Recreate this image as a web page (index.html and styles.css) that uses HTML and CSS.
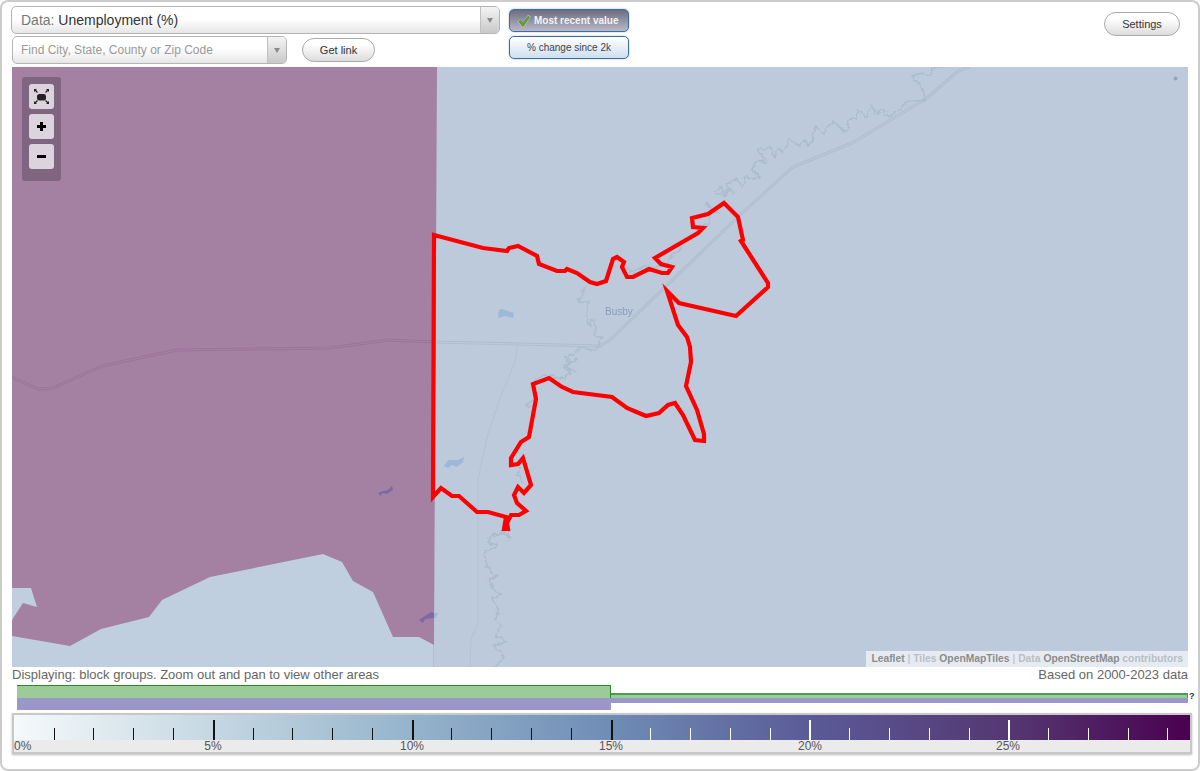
FILE: index.html
```html
<!DOCTYPE html>
<html lang="en">
<head>
<meta charset="utf-8">
<title>Unemployment map</title>
<link rel="stylesheet" href="styles.css">
</head>
<body>
<div class="frame">
  <header class="top">
    <div class="search-col">
      <div class="select data-select">
        <div class="select-text"><span class="muted">Data:</span> Unemployment (%)</div>
        <div class="select-arrow"><i class="tri"></i></div>
      </div>
      <div class="find-row">
        <div class="select find-select">
          <div class="select-text find-text">Find City, State, County or Zip Code</div>
          <div class="select-arrow"><i class="tri"></i></div>
        </div>
        <button class="pill link-btn">Get link</button>
      </div>
    </div>
    <div class="toggle-col">
      <div class="toggle on">
        <svg class="check" width="16" height="16" viewBox="0 0 14 14"><path d="M1.5 7.5 L5 12.5 L7 12.5 L13 3 L10.5 1.5 L6 8 L4 5.5 Z" fill="#d4d6da" opacity=".7"/><path d="M2.5 7.5 L5.5 11.5 L6.5 11.5 L12 3.5 L10.5 2.8 L6 8.8 L4 6.2 Z" fill="#6a9f30" stroke="#4c8420" stroke-width=".5"/></svg>
        <span>Most recent value</span>
      </div>
      <div class="toggle">% change since 2k</div>
    </div>
    <button class="pill settings-btn">Settings</button>
  </header>

  <main class="map">
    <svg class="map-art" width="1176" height="600" viewBox="12 67 1176 600">
      <defs>
        <filter id="meander" filterUnits="userSpaceOnUse" x="12" y="67" width="1176" height="600" color-interpolation-filters="sRGB">
          <feTurbulence type="fractalNoise" baseFrequency="0.16" numOctaves="2" seed="4" result="n"/>
          <feDisplacementMap in="SourceGraphic" in2="n" scale="7" xChannelSelector="R" yChannelSelector="G"/>
        </filter>
      </defs>
      <rect x="12" y="67" width="1176" height="600" fill="#bdcadc"/>
      <rect x="12" y="500" width="422" height="167" fill="#bfcfdf"/>
      <path d="M12 67 L437 67 L434 645 L419 637 L393 637 L373 592 L353 581 L342 562 L323 554 L210 577 L162 600 L149 617 L101 629 L70 646 L12 636 L12 620 L23 603 L37 607 L31 588 L12 588 Z" fill="#a480a3"/>
      <path d="M433.5 645 V667" stroke="#b3c0d2" fill="none"/>

      <g fill="none" stroke-linejoin="round">
        <path d="M12 377 L38 389 L53 388 L102 366 L177 350 L330 348 L388 340 L434 342" stroke="#997499" stroke-width="3"/>
        <path d="M12 377 L38 389 L53 388 L102 366 L177 350 L330 348 L388 340 L434 342" stroke="#a780a6" stroke-width="1"/>
        <path d="M434 342 L600 346 L610 340 L740 215 L793 167 L852 143 L927 98 L958 71 L970 67" stroke="#b0bdce" stroke-width="3"/>
        <path d="M434 342 L600 346 L610 340 L740 215 L793 167 L852 143 L927 98 L958 71 L970 67" stroke="#bdcadc" stroke-width="1"/>
        <path d="M517 347 L515 362 L500 398 L487 437 L478 480 L478 540 L478 622 L471 640 L470 667" stroke="#b5c2d4" stroke-width="1"/>
      </g>

      <g filter="url(#meander)">
        <g fill="none" stroke="#aabccd" stroke-width="4.5" stroke-linejoin="round" transform="translate(660 60) scale(.3333)">
          <path d="M145 425 L140 440 L155 445 L178 460 M160 395 L185 380 L190 405 L210 395 L205 372 L232 355 L245 385 L262 345 L275 355 L300 352 L275 330 L285 305 L318 305 L292 270 L330 260 L345 295 L355 262 L370 278 L388 238 L420 258 L440 240 L450 255 L470 200 L490 220 L520 185 L555 215 L575 170 L590 178 L595 150 L620 170 L635 135 L645 160 L670 150 L690 170 L715 150 L750 120 L760 130 L795 120 L790 90 L775 70 L760 45 L790 40 L815 45 L815 22 L850 20"/>
        </g>
        <g fill="none" stroke="#aabccd" stroke-width="4.5" stroke-linejoin="round" transform="translate(420 190) scale(.3333)">
          <path d="M495 285 L490 310 L475 330 L505 340 L500 370 L505 408 L515 385 L530 410 L525 430 L545 445 L535 465 L525 480 L480 475 L465 490 L435 500 L450 520 L430 535 L470 545"/>
          <path d="M620 230 L630 250 L680 225 L700 235 L740 220 L760 195 L790 170 L770 190"/>
          <path d="M860 40 L880 60 L860 75 L870 95 L840 115"/>
          <path d="M885 10 L905 15 L925 0 L945 10"/>
        </g>
        <g fill="none" stroke="#aabccd" stroke-width="4.5" stroke-linejoin="round" transform="translate(420 360) scale(.3333)">
          <path d="M470 0 L435 15 L450 30 L435 60 L375 45 L345 60 L340 72"/>
          <path d="M345 115 L318 135 L335 145"/>
          <path d="M305 325 L290 345 L310 360"/>
          <path d="M200 535 L240 520 L270 530 L265 505"/>
        </g>
        <g fill="none" stroke="#aabccd" stroke-width="4.5" stroke-linejoin="round" transform="translate(360 520) scale(.3333)">
          <path d="M425 35 L400 45 L380 65 L410 75 L370 100 L385 150 L410 170 L385 180 L405 210 L425 225 L395 235 L415 270 L405 300 L425 315 L405 345 L440 365 L405 375 L415 390 L435 410 L405 440 M425 35 L445 45 L450 60"/>
        </g>
      </g>

      <path d="M499 310 L502 309 L514 313 L513 318 L505 316 L498 318 Z" fill="#9db8d9"/>
      <path d="M444 466 L448 460 L458 460 L464 457 L463 462 L457 467 L452 465 L448 468 Z" fill="#9db8d9"/>
      <path d="M378 493 L383 491 L388 490 L392 486 L393 490 L387 494 L382 493 L381 496 Z" fill="#7d6a9f"/>
      <path d="M419 620 L431 612 L434 613 L434 618 L425 619 L423 623 Z" fill="#7d6a9f"/>
      <path d="M434 613 L438 613 L436 618 L434 618 Z" fill="#9db8d9"/>
      <circle cx="1175.5" cy="78.5" r="2" fill="#95a4bb"/>

      <text class="place" x="605" y="315">Busby</text>

      <path d="M434 235 L483 248 L507 251 L509 248 L518 246 L537 256 L539 264 L557 271 L565 271 L567 269 L577 273 L590 282 L597 284 L606 281 L613 259 L617 257 L624 262 L622 267 L627 277 L633 277 L649 269 L662 273 L668 273 L672 267 L661 264 L655 258 L698 233 L703 228 L693 227 L692 218 L708 214 L724 203 L738 217 L743 240 L741 241 L768 283 L768 287 L736 316 L679 303 L667 291 L678 325 L687 337 L690 347 L691 362 L686 386 L697 410 L704 434 L704 441 L695 440 L683 415 L675 403 L668 405 L659 413 L646 416 L627 408 L612 397 L573 392 L562 387 L549 378 L533 384 L536 399 L529 437 L521 442 L511 458 L511 465 L518 464 L523 458 L531 485 L524 493 L518 487 L514 495 L517 503 L526 511 L519 515 L511 515 L507 523 L508 529 L504 529 L505 523 L506 517 L488 512 L477 512 L459 496 L452 496 L441 488 L433 497 Z" fill="none" stroke="#ff0000" stroke-width="4.2" stroke-linejoin="miter" stroke-miterlimit="8"/>
    </svg>

    <div class="controls">
      <div class="ctl">
        <svg width="25" height="25" viewBox="0 0 25 25"><rect x="8" y="10" width="9" height="6.5" rx="2.5" fill="#222"/><path d="M5 5 H8 L5 8 Z M20 5 H17 L20 8 Z M5 20 H8 L5 17 Z M20 20 H17 L20 17 Z" fill="#222"/><path d="M5.5 5.5 L8.5 8.5 M19.5 5.5 L16.5 8.5 M5.5 19.5 L8.5 16.5 M19.5 19.5 L16.5 16.5" stroke="#222" stroke-width="1.3"/></svg>
      </div>
      <div class="ctl">
        <svg width="25" height="25" viewBox="0 0 25 25"><path d="M8 12.5 H17 M12.5 8 V17" stroke="#000" stroke-width="3"/></svg>
      </div>
      <div class="ctl">
        <svg width="25" height="25" viewBox="0 0 25 25"><path d="M8 12.5 H17" stroke="#000" stroke-width="3"/></svg>
      </div>
    </div>

    <div class="attribution"><b>Leaflet</b> | <span>Tiles</span> <b>OpenMapTiles</b> | <span>Data</span> <b>OpenStreetMap</b> <span>contributors</span></div>
  </main>

  <div class="status">
    <span>Displaying: block groups. Zoom out and pan to view other areas</span>
    <span>Based on 2000-2023 data</span>
  </div>

  <div class="hist">
    <div class="bar green tall"></div>
    <div class="bar green short"></div>
    <div class="unknown">?</div>
    <div class="bar purple tall"></div>
    <div class="bar purple short"></div>
  </div>

  <div class="legend">
    <div class="ramp">
      <i class="tick" style="left:40px"></i><i class="tick" style="left:79px"></i><i class="tick" style="left:119px"></i><i class="tick" style="left:159px"></i>
      <i class="tick major" style="left:199px"></i>
      <i class="tick" style="left:239px"></i><i class="tick" style="left:278px"></i><i class="tick" style="left:318px"></i><i class="tick" style="left:358px"></i>
      <i class="tick major" style="left:398px"></i>
      <i class="tick" style="left:437px"></i><i class="tick" style="left:477px"></i><i class="tick" style="left:517px"></i><i class="tick" style="left:557px"></i>
      <i class="tick major" style="left:597px"></i>
      <i class="tick light" style="left:636px"></i><i class="tick light" style="left:676px"></i><i class="tick light" style="left:716px"></i><i class="tick light" style="left:756px"></i>
      <i class="tick major light" style="left:795px"></i>
      <i class="tick light" style="left:835px"></i><i class="tick light" style="left:875px"></i><i class="tick light" style="left:915px"></i><i class="tick light" style="left:955px"></i>
      <i class="tick major light" style="left:994px"></i>
      <i class="tick light" style="left:1034px"></i><i class="tick light" style="left:1074px"></i><i class="tick light" style="left:1114px"></i><i class="tick light" style="left:1153px"></i>
    </div>
    <div class="scale">
      <span class="first" style="left:0">0%</span>
      <span style="left:199px">5%</span>
      <span style="left:398px">10%</span>
      <span style="left:597px">15%</span>
      <span style="left:796px">20%</span>
      <span style="left:994px">25%</span>
    </div>
  </div>
</div>
</body>
</html>
```

FILE: styles.css
```css
* { box-sizing: border-box; }
html, body { margin: 0; padding: 0; background: #fff; }
body { font-family: "Liberation Sans", Arial, sans-serif; color: #666; }

.frame {
  width: 1200px;
  height: 771px;
  border: 2px solid #ccc;
  border-radius: 8px;
  padding: 0 10px;
  background: #fff;
  display: flex;
  flex-direction: column;
  overflow: hidden;
}

/* top bar */
.top { height: 65px; display: flex; align-items: flex-start; flex: none; }
.search-col { width: 489px; margin-left: -1px; padding-top: 4px; display: flex; flex-direction: column; gap: 2px; }
.select {
  height: 28px;
  display: flex;
  border: 1px solid #b4b4b4;
  border-radius: 5px;
  background: linear-gradient(#fff 45%, #e6e6e6);
  overflow: hidden;
}
.select-text { flex: 1; padding-left: 9px; line-height: 26px; font-size: 14px; color: #333; white-space: nowrap; }
.muted { color: #777; }
.select-arrow {
  width: 19px;
  border-left: 1px solid #c0c0c0;
  background: linear-gradient(#f4f4f4, #c8c8c8);
  display: flex;
  align-items: center;
  justify-content: center;
}
.tri { width: 0; height: 0; border-left: 3.5px solid transparent; border-right: 3.5px solid transparent; border-top: 5px solid #8a8a8a; }
.find-row { display: flex; align-items: center; margin-left: 1px; }
.find-select { width: 275px; }
.find-text { font-size: 12px; color: #999; padding-left: 8px; }
.pill {
  height: 24px;
  padding: 0;
  border: 1px solid #aaa;
  border-radius: 12px;
  background: linear-gradient(#fff 25%, #dcdcdc);
  font-family: inherit;
  font-size: 11px;
  color: #333;
}
.link-btn { width: 73px; margin-left: 15px; }
.settings-btn { width: 76px; margin: 10px 8px 0 auto; }

.toggle-col { width: 120px; margin: 7px 0 0 9px; display: flex; flex-direction: column; gap: 4px; }
.toggle {
  height: 23px;
  border: 1px solid #3a6ea5;
  border-radius: 5px;
  box-shadow: 0 0 2px #aaa;
  background: linear-gradient(#fff, #cddff0);
  font-size: 10px;
  color: #444;
  display: flex;
  align-items: center;
  justify-content: center;
  gap: 2px;
  white-space: nowrap;
}
.toggle.on {
  background: linear-gradient(#6c6c82, #b9b9c9);
  color: #f2f2f2;
  font-weight: bold;
  justify-content: flex-start;
  padding-left: 6px;
}
.check { flex: none; }

/* map */
.map { position: relative; height: 600px; flex: none; overflow: hidden; }
.map-art { display: block; }
.place { font-family: "Liberation Sans", Arial, sans-serif; font-size: 10px; fill: #8a9dba; }
.controls {
  position: absolute;
  left: 10px;
  top: 10px;
  width: 39px;
  height: 104px;
  padding: 7px;
  border-radius: 3px;
  background: #7f6580;
  display: flex;
  flex-direction: column;
  gap: 5px;
}
.ctl { width: 25px; height: 25px; border-radius: 3px; background: #dcd4dd; }
.ctl svg { display: block; }
.attribution {
  position: absolute;
  right: 0;
  bottom: 0;
  height: 16px;
  padding: 0 5px;
  line-height: 16px;
  font-size: 10.3px;
  font-weight: bold;
  color: #c2c8cf;
  background: #e5ebf1;
  white-space: nowrap;
}
.attribution b { color: #8c8c8c; }
.attribution span { color: #b9bec5; }

/* status */
.status { height: 16px; flex: none; display: flex; justify-content: space-between; font-size: 13px; line-height: 16px; color: #666; }

/* histogram */
.hist {
  margin: 2px 0 0 5px;
  height: 26px;
  flex: none;
  display: grid;
  grid-template-columns: 594px 577px 8px;
  grid-template-rows: 13px 13px;
}
.bar.green { background: #9bcb97; align-self: end; }
.bar.green.tall { height: 13px; border-top: 1px solid #2a8a2a; border-right: 1px solid #2a8a2a; }
.bar.green.short { height: 5px; border-top: 2px solid #4a9e52; border-right: 1px solid #4a9e52; }
.bar.purple { background: #9b98c9; align-self: start; }
.bar.purple.tall { height: 12px; }
.bar.purple.short { height: 5px; }
.unknown { font-size: 9px; font-weight: bold; color: #333; line-height: 9px; padding: 7px 0 0 1px; }

/* legend */
.legend {
  margin: 2px -4px 0 0;
  height: 41px;
  flex: none;
  border: 2px solid #c8c8c8;
  box-shadow: 0 1px 2px #bbb;
  background: #ebebeb;
}
.ramp {
  position: relative;
  height: 25px;
  background: linear-gradient(to right, #f5fafb 0%, #c5d7e2 17%, #94b3cb 34%, #6f8cb5 51%, #5a5a97 68%, #543570 85.5%, #4a0050 100%);
}
.tick { position: absolute; bottom: 0; width: 1px; height: 12px; background: #111; }
.tick.major { width: 2px; height: 20px; }
.tick.light { background: #fff; }
.scale { position: relative; height: 12px; font-size: 12px; line-height: 13px; color: #555; }
.scale span { position: absolute; top: 0; transform: translateX(-50%); }
.scale span.first { transform: none; }
```
